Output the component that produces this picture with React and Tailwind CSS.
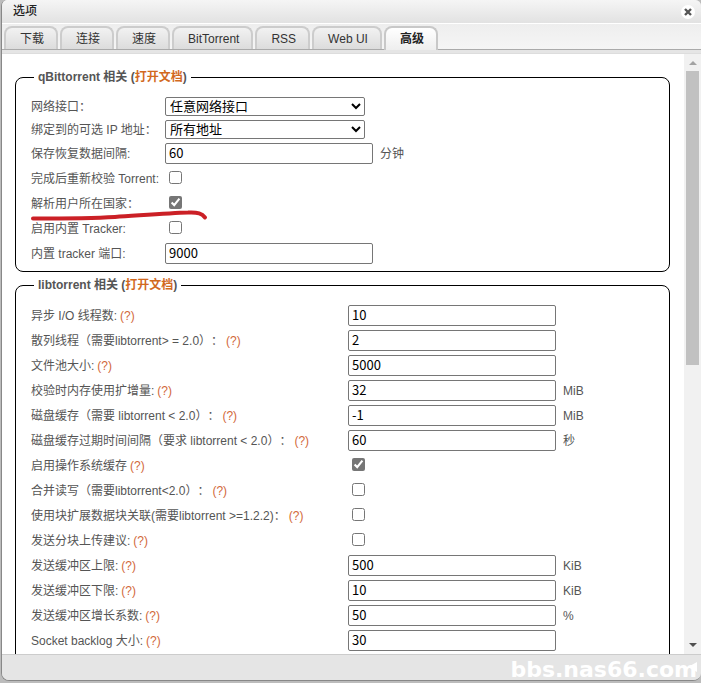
import { useState } from "react";

const tabs = ["下载", "连接", "速度", "BitTorrent", "RSS", "Web UI", "高级"];

const qbittorrentRows = [
  { id: "networkInterface", label: "网络接口：", type: "select", value: "任意网络接口" },
  { id: "optionalIp", label: "绑定到的可选 IP 地址：", type: "select", value: "所有地址" },
  { id: "saveResume", label: "保存恢复数据间隔:", type: "text", value: "60", unit: "分钟" },
  { id: "recheck", label: "完成后重新校验 Torrent:", type: "checkbox", value: false },
  { id: "resolveCountries", label: "解析用户所在国家：", type: "checkbox", value: true, marked: true },
  { id: "enableTracker", label: "启用内置 Tracker:", type: "checkbox", value: false },
  { id: "trackerPort", label: "内置 tracker 端口:", type: "text", value: "9000" },
];

const libtorrentRows = [
  { id: "asyncIo", label: "异步 I/O 线程数:", type: "text", value: "10", help: true },
  { id: "hashing", label: "散列线程（需要libtorrent> = 2.0）：", type: "text", value: "2", help: true },
  { id: "filePool", label: "文件池大小:", type: "text", value: "5000", help: true },
  { id: "checkingMemory", label: "校验时内存使用扩增量:", type: "text", value: "32", unit: "MiB", help: true },
  { id: "diskCache", label: "磁盘缓存（需要 libtorrent < 2.0）：", type: "text", value: "-1", unit: "MiB", help: true },
  { id: "cacheExpiry", label: "磁盘缓存过期时间间隔（要求 libtorrent < 2.0）：", type: "text", value: "60", unit: "秒", help: true },
  { id: "osCache", label: "启用操作系统缓存", type: "checkbox", value: true, help: true },
  { id: "coalesce", label: "合并读写（需要libtorrent<2.0）：", type: "checkbox", value: false, help: true },
  { id: "pieceExtent", label: "使用块扩展数据块关联(需要libtorrent >=1.2.2)：", type: "checkbox", value: false, help: true },
  { id: "uploadSuggestions", label: "发送分块上传建议:", type: "checkbox", value: false, help: true },
  { id: "sendWatermark", label: "发送缓冲区上限:", type: "text", value: "500", unit: "KiB", help: true },
  { id: "sendLowWatermark", label: "发送缓冲区下限:", type: "text", value: "10", unit: "KiB", help: true },
  { id: "sendFactor", label: "发送缓冲区增长系数:", type: "text", value: "50", unit: "%", help: true },
  { id: "backlog", label: "Socket backlog 大小:", type: "text", value: "30", help: true },
];

const Control = ({ row }) => {
  if (row.type === "select") {
    return (
      <select
        id={row.id}
        className="h-[19px] w-[200px] rounded-xs border border-[#767676] bg-white text-[13px] leading-4 text-black"
      >
        <option>{row.value}</option>
      </select>
    );
  }
  if (row.type === "checkbox") {
    return (
      <input
        id={row.id}
        type="checkbox"
        defaultChecked={row.value}
        className="mx-1 mb-0.5 size-[13px] accent-[#767676]"
      />
    );
  }
  return (
    <input
      id={row.id}
      type="text"
      defaultValue={row.value}
      className="h-[21px] w-[208px] rounded-xs border border-[#767676] bg-white px-[3px] pb-0.5 font-['Noto_Sans_CJK_SC',sans-serif] text-[13px] leading-4 text-black"
    />
  );
};

const Row = ({ row, labelWidth }) => (
  <div
    className={`relative flex items-center ${row.type === "select" ? "h-[23px]" : "h-[25px]"}`}
  >
    <div className={`${labelWidth} shrink-0 whitespace-nowrap`}>
      <label htmlFor={row.id}>{row.label}</label>
      {row.help && (
        <a href="#help" className="ml-[3px] text-[#d2693a]">
          (?)
        </a>
      )}
    </div>
    <div className="flex items-center gap-[7px]">
      <Control row={row} />
      {row.unit && <span>{row.unit}</span>}
    </div>
    {/* Hand-drawn underline */}
    {row.marked && (
      <svg
        className="pointer-events-none absolute top-[17px] left-0 overflow-visible"
        width="178"
        height="14"
        fill="none"
        stroke="#cb2026"
        strokeWidth="4"
        strokeLinecap="round"
      >
        <path d="M2 10.5C30 10.5 58 10.5 84 9C108 7.500 138 5 157 4.500C167 4 171 5.500 174 9.500" />
      </svg>
    )}
  </div>
);

const Section = ({ title, rows, labelWidth }) => (
  <fieldset className="mb-1 min-w-0 rounded-lg border border-black px-[15px] pb-[5px] last:pb-8">
    <legend className="ml-[3px] px-1 leading-[18px] font-bold">
      {title} 相关 (
      <a href="#docs" className="text-[#d2691e]">
        打开文档
      </a>
      )
    </legend>
    <div className="pt-[9px]">
      {rows.map((row) => (
        <Row key={row.id} row={row} labelWidth={labelWidth} />
      ))}
    </div>
  </fieldset>
);

const App = () => {
  const [active, setActive] = useState("高级");

  return (
    <div className="h-screen overflow-hidden bg-[#bcbcbc] pb-0.5 pl-px font-['Liberation_Sans','Noto_Sans_CJK_SC',sans-serif] text-xs text-[#555] [text-spacing-trim:space-all]">
      <div className="flex h-full flex-col overflow-hidden rounded-t-md rounded-b-lg border-b border-l border-[#888] bg-[#e5e5e5]">
        {/* Title bar */}
        <header className="flex h-[23px] shrink-0 items-center justify-between bg-linear-to-b from-[#f5f5f5] to-[#e2e2e2] pr-1.5 pl-[11px]">
          <h1 className="pb-0.5 leading-4 font-medium text-[#222]">选项</h1>
          <button
            aria-label="关闭"
            className="flex size-[14px] items-center justify-center rounded-full bg-white"
          >
            <svg width="8" height="8" viewBox="0 0 8 8" stroke="#555" strokeWidth="2.400">
              <path d="M1 1L7 7M7 1L1 7" />
            </svg>
          </button>
        </header>

        {/* Tabs */}
        <nav className="flex h-[27px] shrink-0 items-end gap-0.5 border-t border-b border-t-white border-b-[#aaa] bg-linear-to-b from-[#eee] to-[#f5f5f5] pl-0.5">
          {tabs.map((tab) => (
            <button
              key={tab}
              onClick={() => setActive(tab)}
              className={
                tab === active
                  ? "-mb-px h-6 rounded-t-lg border-2 border-b-0 border-[#c8c8c8] bg-linear-to-b from-white to-[#eee] pr-3 pl-3.5 font-bold text-[#222]"
                  : "h-[23px] rounded-t-lg border-2 border-b-0 border-[#ccc] bg-linear-to-b from-[#f2f2f2] to-[#dcdcdc] pr-3 pl-3.5 text-[#333]"
              }
            >
              {tab}
            </button>
          ))}
        </nav>
        <div className="h-1 shrink-0 border-b border-[#ddd] bg-[#e5e5e5]" />

        {/* Settings */}
        <main className="flex min-h-0 flex-1 bg-white">
          <div className="min-w-0 flex-1 overflow-hidden pt-3.5 pr-3.5 pl-[13px]">
            <Section title="qBittorrent" rows={qbittorrentRows} labelWidth="w-[134px]" />
            <Section title="libtorrent" rows={libtorrentRows} labelWidth="w-[317px]" />
          </div>
          <div className="flex w-[17px] shrink-0 flex-col items-center bg-[#f1f1f1]">
            <svg className="h-[17px] w-2 shrink-0" viewBox="0 0 8 17" fill="#a3a3a3">
              <path d="M0 11L4 7L8 11Z" />
            </svg>
            <div className="min-h-0 w-full flex-1 px-0.5">
              <div className="h-[52%] bg-[#c1c1c1]" />
            </div>
            <svg className="h-[17px] w-2 shrink-0" viewBox="0 0 8 17" fill="#505050">
              <path d="M0 6L4 10L8 6Z" />
            </svg>
          </div>
        </main>

        <footer className="relative flex h-[26px] shrink-0 items-center justify-end border-t border-[#ccc] bg-[#e5e5e5] pr-1">
          <span className="pt-1 font-['DejaVu_Sans',sans-serif] text-[22px] leading-6 font-bold text-white">
            bbs.nas66.com
          </span>
          <svg className="absolute right-1 bottom-2" width="9" height="10" fill="white">
            <path d="M9 0V10L0 5Z" />
          </svg>
        </footer>
      </div>
    </div>
  );
};

export default App;
